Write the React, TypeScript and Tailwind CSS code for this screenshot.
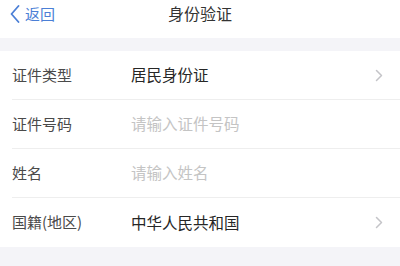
const rows = [
  { label: '证件类型', value: '居民身份证', arrow: true },
  { label: '证件号码', placeholder: '请输入证件号码' },
  { label: '姓名', placeholder: '请输入姓名' },
  { label: '国籍(地区)', value: '中华人民共和国', arrow: true },
]

const BackArrow = () => (
  <svg width="10" height="18" viewBox="0 0 10 18" fill="none">
    <path d="M8.5 1 L1.5 9 L8.5 17" stroke="currentColor" strokeWidth="1.8" strokeLinecap="round" strokeLinejoin="round" />
  </svg>
)

const Arrow = () => (
  <svg width="8" height="13" viewBox="0 0 8 13" fill="none" className="text-[#c4c4c8]">
    <path d="M1.5 1.5 L6.5 6.5 L1.5 11.5" stroke="currentColor" strokeWidth="1.5" strokeLinecap="round" strokeLinejoin="round" />
  </svg>
)

export default function App() {
  return (
    <div className="w-[400px] h-[266px] bg-[#f4f4f8] font-['Noto_Sans_CJK_SC',sans-serif] overflow-hidden">
      {/* Nav bar */}
      <div className="relative h-[38px] bg-white flex items-start justify-center">
        <div className="absolute left-[10px] top-[5px] flex items-center gap-[5px] text-[#4b7fd6]">
          <BackArrow />
          <span className="text-[15px] leading-[18px]">返回</span>
        </div>
        <span className="mt-[3px] text-[16px] leading-[20px] text-[#333]">身份验证</span>
      </div>

      <div className="h-[13px]" />

      {/* Form */}
      <div className="bg-white">
        {rows.map((r, i) => (
          <div key={r.label} className="pl-[12px]">
            <div
              className={`h-[49px] flex items-center pr-[17px] ${
                i < rows.length - 1 ? 'border-b border-[#eeeeee]' : ''
              }`}
            >
              <span className="w-[119px] text-[15px] text-[#4a4a4a]">{r.label}</span>
              {r.value ? (
                <span className="flex-1 text-[15.5px] text-[#262626]">{r.value}</span>
              ) : (
                <span className="flex-1 text-[15.5px] text-[#c4c4c4]">{r.placeholder}</span>
              )}
              {r.arrow && <Arrow />}
            </div>
          </div>
        ))}
      </div>
    </div>
  )
}
